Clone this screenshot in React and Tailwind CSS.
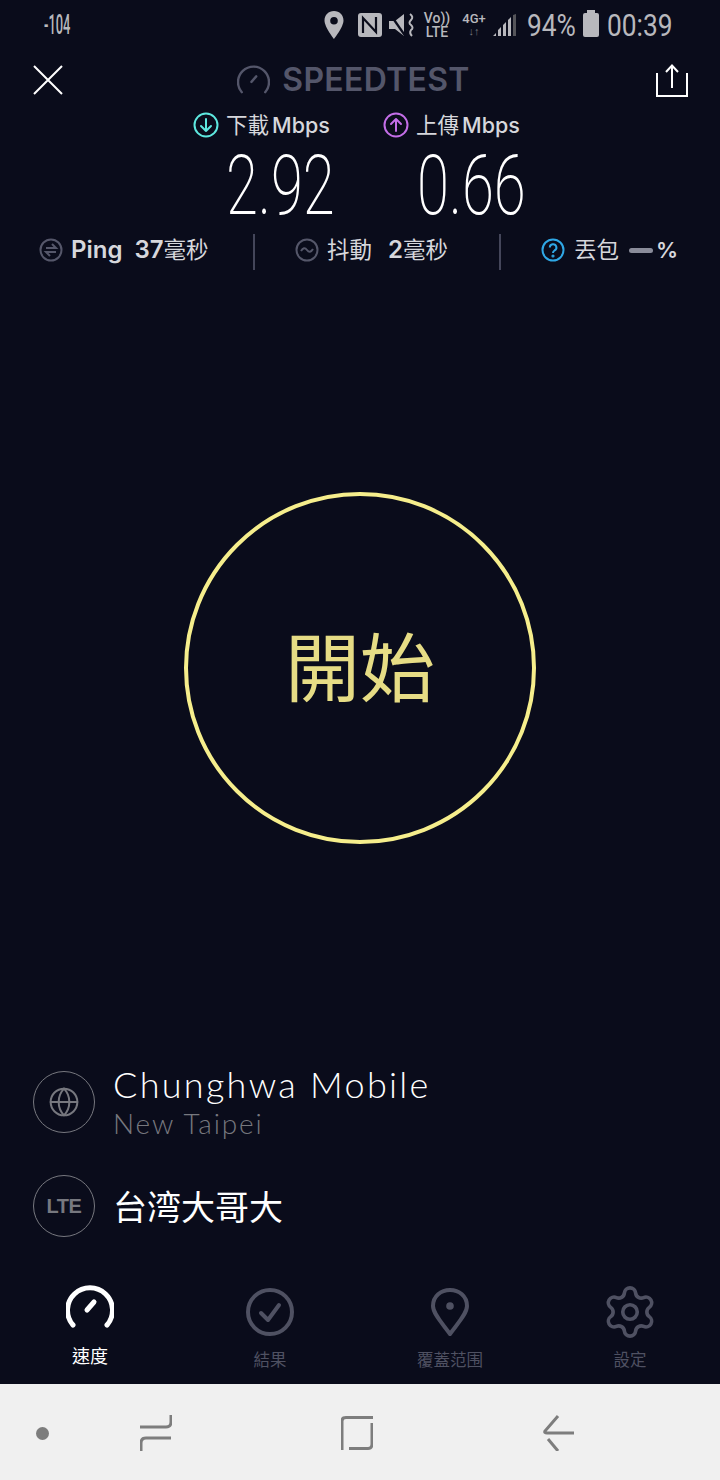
import { Globe, Settings } from 'lucide-react';

const cjk = '"Inter", "Noto Sans CJK TC", sans-serif';

function Gauge({ size = 48, stroke = 5, className }) {
  return (
    <svg viewBox="0 0 48 48" width={size} height={size} className={className} fill="none" stroke="currentColor" strokeWidth={stroke} strokeLinecap="round">
      <path d="M7 41 A22.5 22.5 0 1 1 41 41" />
      <path d="M21 26 L28 18" />
    </svg>
  );
}

function CircleIcon({ color, children }) {
  return (
    <svg viewBox="0 0 26 26" width="26" height="26" fill="none" stroke={color} strokeWidth="2" strokeLinecap="round" strokeLinejoin="round">
      <circle cx="13" cy="13" r="11.5" />
      {children}
    </svg>
  );
}

function StatusBar() {
  return (
    <div className="h-[50px] flex items-center pl-[44px] pr-[48px] text-[#b8b8bd]" style={{ fontFamily: 'Roboto, sans-serif' }}>
      <div className="w-[30px] text-[28px] leading-none font-medium origin-left scale-x-[0.46] whitespace-nowrap">-104</div>
      <div className="ml-auto flex items-center">
        <svg viewBox="0 0 20 28" width="20" height="28" fill="currentColor"><path fillRule="evenodd" d="M10 0 C4.5 0 0.5 4 0.5 9.5 C0.5 16 10 28 10 28 C10 28 19.5 16 19.5 9.5 C19.5 4 15.5 0 10 0 Z M10 6 A3.8 3.8 0 1 1 10 13.6 A3.8 3.8 0 1 1 10 6 Z" /></svg>
        <svg viewBox="0 0 24 24" width="24" height="24" className="ml-[14px]"><rect width="24" height="24" rx="3" fill="currentColor" /><path d="M5 20 V5 L18 19 V4" stroke="#0a0c1b" strokeWidth="2.2" fill="none" /></svg>
        <svg viewBox="0 0 26 26" width="26" height="26" className="ml-[7px]" fill="currentColor"><path d="M0 9 H6 L15 2 V24 L6 17 H0 Z" /><path d="M1 2 L17 25" stroke="#0a0c1b" strokeWidth="2.2" /><path d="M21 2 q4 3 1 6 q-3 3 0 5 q3 3 0 5 q-2 3 1 6" stroke="currentColor" strokeWidth="2" fill="none" /></svg>
        <div className="ml-[9px] w-[26px] flex flex-col items-center text-[14px] leading-[14px] font-medium"><span>Vo))</span><span>LTE</span></div>
        <div className="ml-[11px] w-[26px] flex flex-col items-center text-[13px] leading-[13px] font-medium"><span>4G+</span><span className="text-[11px] text-[#77777c]">↓↑</span></div>
        <svg viewBox="0 0 24 22" width="24" height="22" className="ml-[6px]" fill="currentColor"><path d="M0 22 L3 19 V22 Z M5 22 V16 L8 13 V22 Z M10 22 V11 L13 8 V22 Z M15 22 V6 L18 3 V22 Z" /><path d="M20 1 L23 0 V22 H20 Z" fill="#55555a" /></svg>
        <div className="w-[63px] ml-[10px] text-[31px] leading-none origin-left scale-x-[0.85] whitespace-nowrap">94%</div>
        <div className="w-[16px] h-[24px] ml-[-7px] bg-current rounded-[2px] relative"><div className="absolute -top-[3px] left-[4px] w-[8px] h-[3px] bg-current" /></div>
        <div className="w-[65px] ml-[8px] text-[31px] leading-none origin-left scale-x-[0.85] whitespace-nowrap">00:39</div>
      </div>
    </div>
  );
}

function Header() {
  return (
    <div className="h-[60px] flex items-center justify-between pl-[33px] pr-[32px]">
      <svg viewBox="0 0 30 30" width="30" height="30" fill="none" stroke="#fff" strokeWidth="2"><path d="M1 1 L29 29 M29 1 L1 29" /></svg>
      <div className="flex items-center text-[#54566a] mr-[12px]">
        <Gauge size={33} stroke={3.5} />
        <span className="ml-[12px] text-[32px] leading-none font-semibold tracking-[0.3px]" style={{ fontFamily: 'Inter, sans-serif' }}>SPEEDTEST</span>
      </div>
      <svg viewBox="0 0 32 33" width="32" height="33" fill="none" stroke="#fff" strokeWidth="2"><path d="M1 9 V32 H31 V9" /><path d="M16 24 V2 M10 8 L16 1.5 L22 8" /></svg>
    </div>
  );
}

function Speeds() {
  return (
    <div className="text-white" style={{ fontFamily: cjk }}>
      <div className="h-[30px] flex items-center text-[21.5px] text-[#d6d7dc]">
        <div className="ml-[193px] flex items-center w-[190px]">
          <CircleIcon color="#5ee8df"><path d="M13 7 V19 M8 14 L13 19 L18 14" /></CircleIcon>
          <span className="ml-[7px] whitespace-nowrap">下載</span>
          <span className="ml-[3px] whitespace-nowrap font-medium">Mbps</span>
        </div>
        <div className="flex items-center">
          <CircleIcon color="#c46ee8"><path d="M13 19 V7 M8 12 L13 7 L18 12" /></CircleIcon>
          <span className="ml-[7px] whitespace-nowrap">上傳</span>
          <span className="ml-[3px] whitespace-nowrap font-medium">Mbps</span>
        </div>
      </div>
      <div className="h-[92px] flex items-center text-[84px] leading-none" style={{ fontFamily: 'Roboto, sans-serif', fontWeight: 200 }}>
        <div className="ml-[226px] w-[191px] origin-left scale-x-[0.69] whitespace-nowrap">2.92</div>
        <div className="origin-left scale-x-[0.69] whitespace-nowrap">0.66</div>
      </div>
    </div>
  );
}

function Stats() {
  return (
    <div className="h-[40px] flex items-center text-[22.5px] text-[#d6d7dc] whitespace-nowrap" style={{ fontFamily: cjk }}>
      <div className="ml-[39px] w-[214px] flex items-center -translate-y-[2px]">
        <svg viewBox="0 0 24 24" width="24" height="24" fill="none" stroke="#55576a" strokeWidth="2"><circle cx="12" cy="12" r="10.5" /><path d="M7 10 H17 L13 6 M17 14 H7 L11 18" /></svg>
        <span className="ml-[8px] text-[24px] font-semibold">Ping</span>
        <span className="ml-[12px] text-[24px] font-semibold">37</span>
        <span>毫秒</span>
      </div>
      <div className="w-[2px] h-[36px] bg-[#44465a]" />
      <div className="ml-[40px] w-[204px] flex items-center -translate-y-[2px]">
        <svg viewBox="0 0 24 24" width="24" height="24" fill="none" stroke="#55576a" strokeWidth="2"><circle cx="12" cy="12" r="10.5" /><path d="M6 13 Q9 8 12 12 T18 11" /></svg>
        <span className="ml-[8px]">抖動</span>
        <span className="ml-[16px] text-[24px] font-semibold">2</span>
        <span>毫秒</span>
      </div>
      <div className="w-[2px] h-[36px] bg-[#44465a]" />
      <div className="ml-[40px] flex items-center -translate-y-[2px]">
        <svg viewBox="0 0 24 24" width="24" height="24" fill="none" stroke="#2fa8e6" strokeWidth="2"><circle cx="12" cy="12" r="10.5" /><path d="M8.8 9.5 A3.3 3.3 0 1 1 13.5 12.5 C12.4 13.2 12 13.8 12 15" /><circle cx="12" cy="18" r="0.6" fill="#2fa8e6" /></svg>
        <span className="ml-[9px]">丟包</span>
        <div className="ml-[10px] w-[24px] h-[5px] bg-[#8a8c9a] rounded-full" />
        <span className="ml-[3px] text-[22px] font-semibold">%</span>
      </div>
    </div>
  );
}

function StartButton() {
  return (
    <div className="flex-1 flex items-start justify-center pt-[220px]">
      <div className="w-[352px] h-[352px] rounded-full border-[4px] border-[#f6ee8c] flex items-center justify-center">
        <span className="text-[75px] leading-none text-[#e6dc85] -translate-y-[5px]" style={{ fontFamily: '"Noto Sans CJK TC", sans-serif' }}>開始</span>
      </div>
    </div>
  );
}

function Provider() {
  return (
    <div className="pl-[33px]">
      <div className="flex items-center">
        <div className="w-[62px] h-[62px] rounded-full border border-[#77787f] flex items-center justify-center text-[#77787f]">
          <Globe size={32} strokeWidth={2} absoluteStrokeWidth />
        </div>
        <div className="ml-[18px]" style={{ fontFamily: 'Lato, sans-serif' }}>
          <div className="text-[36px] leading-[38px] font-light text-white tracking-[2.3px]">Chunghwa Mobile</div>
          <div className="mt-[5px] text-[28px] leading-[30px] font-light text-[#77787f] tracking-[1.9px]">New Taipei</div>
        </div>
      </div>
      <div className="mt-[37px] flex items-center">
        <div className="w-[62px] h-[62px] rounded-full border border-[#77787f] flex items-center justify-center text-[#77787f] text-[20px] font-bold tracking-[-0.5px]" style={{ fontFamily: '"Liberation Sans", sans-serif' }}>
          LTE
        </div>
        <div className="ml-[18px] text-[34px] leading-none text-white" style={{ fontFamily: '"Noto Sans CJK TC", sans-serif' }}>台湾大哥大</div>
      </div>
    </div>
  );
}

function Tabs() {
  const grey = 'text-[#4f5162]';
  return (
    <div className="mt-[47px] h-[100px] grid grid-cols-4 text-[16.5px]" style={{ fontFamily: '"Noto Sans CJK TC", sans-serif' }}>
      <div className="flex flex-col items-center text-white">
        <Gauge size={48} stroke={5} />
        <span className="mt-[11px] text-[18px] leading-[24px]">速度</span>
      </div>
      <div className={`flex flex-col items-center pt-[4px] ${grey}`}>
        <svg viewBox="0 0 48 48" width="48" height="48" fill="none" stroke="currentColor" strokeWidth="4" strokeLinecap="round" strokeLinejoin="round"><circle cx="24" cy="24" r="22" /><path d="M15 25 L22 32 L33 17" /></svg>
        <span className="mt-[11px] leading-[24px]">結果</span>
      </div>
      <div className={`flex flex-col items-center pt-[4px] ${grey}`}>
        <svg viewBox="0 0 40 48" width="40" height="48" fill="currentColor"><path d="M20 46 C13 36 3 26 3 18 C3 8 11 2 20 2 C29 2 37 8 37 18 C37 26 27 36 20 46 Z" fill="none" stroke="currentColor" strokeWidth="4" strokeLinejoin="round" /><circle cx="20" cy="18" r="3.8" /></svg>
        <span className="mt-[11px] leading-[24px]">覆蓋范围</span>
      </div>
      <div className={`flex flex-col items-center pt-[4px] ${grey}`}>
        <Settings size={58} strokeWidth={1.5} className="my-[-5px]" />
        <span className="mt-[11px] leading-[24px]">設定</span>
      </div>
    </div>
  );
}

function NavBar() {
  return (
    <div className="h-[96px] pt-[2px] bg-[#f0f0f0] flex items-center text-[#7d7d7d]">
      <div className="ml-[36px] w-[13px] h-[13px] rounded-full bg-current" />
      <svg viewBox="0 0 32 36" width="32" height="36" className="ml-[91px]" fill="none" stroke="currentColor" strokeWidth="3"><path d="M31 0 V7 Q31 12 26 12 H0" /><path d="M31 23 H6 Q1 23 1 28 V36" /></svg>
      <svg viewBox="0 0 32 34" width="32" height="34" className="ml-[169px]" fill="none" stroke="currentColor" strokeWidth="3"><path d="M1 34 V5 Q1 1.5 5 1.5 H32" /><path d="M8 32.5 H27 Q31 32.5 31 28 V7" /></svg>
      <svg viewBox="0 0 31 36" width="31" height="36" className="ml-[170px]" fill="none" stroke="currentColor" strokeWidth="3"><path d="M15 1 L2 16 Q1 18 4 18 H31" /><path d="M5 24 L15 36" /></svg>
    </div>
  );
}

export default function App() {
  return (
    <div className="w-[720px] h-[1480px] bg-[#0a0c1b] flex flex-col overflow-hidden">
      <StatusBar />
      <Header />
      <Speeds />
      <Stats />
      <StartButton />
      <Provider />
      <Tabs />
      <NavBar />
    </div>
  );
}
